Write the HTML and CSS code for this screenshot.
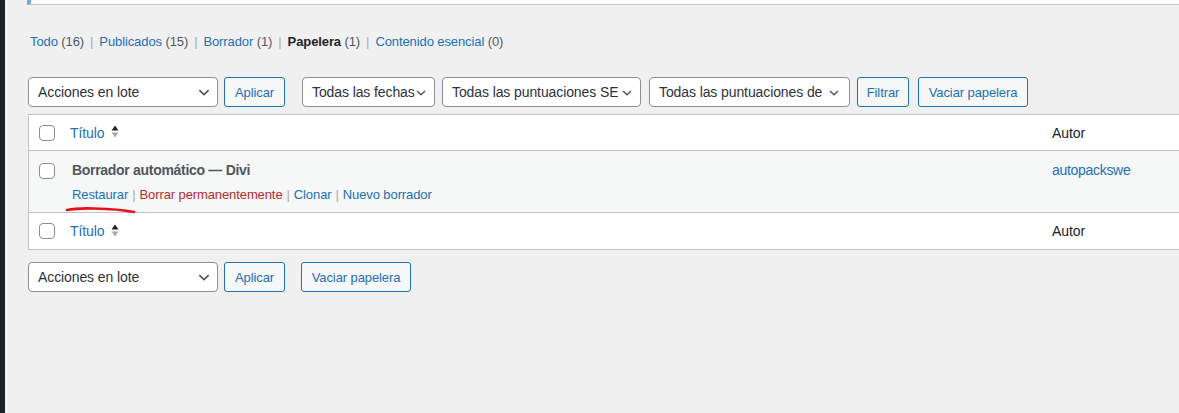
FILE: index.html
```html
<!DOCTYPE html>
<html lang="es">
<head>
<meta charset="utf-8">
<title>Entradas – Papelera</title>
<link rel="stylesheet" href="styles.css">
</head>
<body>
<div class="adminmenu"></div>
<main class="content">
  <div class="notice"></div>

  <ul class="subsubsub">
    <li><a class="link">Todo <span class="count">(16)</span></a><span class="sep">|</span></li>
    <li><a class="link">Publicados <span class="count">(15)</span></a><span class="sep">|</span></li>
    <li><a class="link">Borrador <span class="count">(1)</span></a><span class="sep">|</span></li>
    <li><a class="link current">Papelera <span class="count">(1)</span></a><span class="sep">|</span></li>
    <li><a class="link">Contenido esencial <span class="count">(0)</span></a></li>
  </ul>

  <div class="tablenav tablenav-top">
    <div class="actions">
      <div class="select w-bulk"><span class="select-text">Acciones en lote</span><svg class="chev" viewBox="0 0 10 6"><path d="M1 1 L5 4.8 L9 1"/></svg></div>
      <button class="btn w-apply">Aplicar</button>
    </div>
    <div class="actions">
      <div class="select w-dates"><span class="select-text">Todas las fechas</span><svg class="chev" viewBox="0 0 10 6"><path d="M1 1 L5 4.8 L9 1"/></svg></div>
      <div class="select w-seo"><span class="select-text">Todas las puntuaciones SEO</span><svg class="chev" viewBox="0 0 10 6"><path d="M1 1 L5 4.8 L9 1"/></svg></div>
      <div class="select w-read"><span class="select-text">Todas las puntuaciones de legibilidad</span><svg class="chev" viewBox="0 0 10 6"><path d="M1 1 L5 4.8 L9 1"/></svg></div>
      <button class="btn w-filter">Filtrar</button>
      <button class="btn w-empty">Vaciar papelera</button>
    </div>
  </div>

  <table class="list-table">
    <thead>
      <tr>
        <td class="check-column"><span class="checkbox"></span></td>
        <th class="column-title"><a class="sort-link">Título <svg class="sort" viewBox="0 0 8 14"><path class="up" d="M0.5 5.5 L4 0.5 L7.5 5.5 Z"/><path class="down" d="M0.5 7.5 L7.5 7.5 L4 12.5 Z"/></svg></a></th>
        <th class="column-author">Autor</th>
      </tr>
    </thead>
    <tbody>
      <tr class="alt">
        <td class="check-column row-check"><span class="checkbox"></span></td>
        <td class="column-title body-title">
          <strong class="row-title">Borrador automático — Divi</strong>
          <div class="row-actions">
            <a class="link">Restaurar</a><span class="sep">|</span><a class="link delete">Borrar permanentemente</a><span class="sep">|</span><a class="link">Clonar</a><span class="sep">|</span><a class="link">Nuevo borrador</a>
          </div>
        </td>
        <td class="column-author body-author"><a class="link">autopackswe</a></td>
      </tr>
    </tbody>
    <tfoot>
      <tr>
        <td class="check-column"><span class="checkbox"></span></td>
        <th class="column-title"><a class="sort-link">Título <svg class="sort" viewBox="0 0 8 14"><path class="up" d="M0.5 5.5 L4 0.5 L7.5 5.5 Z"/><path class="down" d="M0.5 7.5 L7.5 7.5 L4 12.5 Z"/></svg></a></th>
        <th class="column-author">Autor</th>
      </tr>
    </tfoot>
  </table>

  <div class="tablenav tablenav-bottom">
    <div class="actions">
      <div class="select w-bulk"><span class="select-text">Acciones en lote</span><svg class="chev" viewBox="0 0 10 6"><path d="M1 1 L5 4.8 L9 1"/></svg></div>
      <button class="btn w-apply">Aplicar</button>
    </div>
    <div class="actions">
      <button class="btn w-empty">Vaciar papelera</button>
    </div>
  </div>
</main>
<svg class="annotation" width="80" height="12" viewBox="0 0 80 12"><path d="M3 6 Q 12 4 30 4.5 Q 55 5 70 8"/></svg>
</body>
</html>
```

FILE: styles.css
```css
* { box-sizing: border-box; }

html, body {
  margin: 0;
  height: 100%;
}

body {
  background: #f0f0f1;
  font-family: "Liberation Sans", Arial, sans-serif;
  letter-spacing: -0.1px;
  color: #3c434a;
  display: flex;
  overflow: hidden;
  position: relative;
}

.adminmenu {
  width: 5px;
  flex: 0 0 5px;
  background: #1d2327;
}

.content {
  flex: 1;
  padding-left: 23px;
  min-width: 0;
}

.notice {
  height: 5px;
  margin-left: -1px;
  background: #fff;
  border-left: 4px solid #72aee6;
  border-bottom: 1px solid #c3c4c7;
}

/* status links */
.subsubsub {
  list-style: none;
  margin: 24px 0 0;
  padding: 0 0 0 2px;
  display: flex;
  font-size: 13px;
  line-height: 26px;
  height: 26px;
}

.subsubsub li { display: flex; white-space: pre; }

.link { color: #2271b1; text-decoration: none; }
.link.current { color: #1d2327; font-weight: 700; }
.count { color: #50575e; font-weight: 400; }
.sep { color: #a7aaad; padding: 0 6px; }

/* table nav */
.tablenav {
  display: flex;
  align-items: center;
  height: 30px;
}

.tablenav-top { margin-top: 22px; margin-bottom: 7px; }
.tablenav-bottom { margin-top: 12px; }

.actions { display: flex; gap: 6px; }
.tablenav-top .actions + .actions { margin-left: 17px; gap: 7px; }
.tablenav-bottom .actions + .actions { margin-left: 16px; }

.select {
  position: relative;
  height: 30px;
  background: #fff;
  border: 1px solid #8c8f94;
  border-radius: 4px;
  color: #2c3338;
  font-size: 14px;
  line-height: 28px;
  padding: 0 22px 0 9px;
  display: flex;
}

.select-text {
  overflow: hidden;
  white-space: nowrap;
  flex: 1;
}

.chev {
  position: absolute;
  right: 8px;
  top: 12px;
  width: 10px;
  height: 6px;
  fill: none;
  stroke: #50575e;
  stroke-width: 1.5;
}

.w-bulk { width: 190px; }
.w-bulk .chev { right: 7px; width: 12px; height: 7px; top: 11px; }
.w-dates { width: 133px; padding-right: 18px; }
.w-seo { width: 199px; }
.w-read { width: 201px; margin-left: 1px; padding-right: 27px; }
.w-read .chev { right: 10px; }

.btn {
  height: 30px;
  margin: 0;
  padding: 0;
  background: #f6f7f7;
  border: 1px solid #2271b1;
  border-radius: 3px;
  color: #2271b1;
  font-family: inherit;
  letter-spacing: inherit;
  font-size: 13px;
  text-align: center;
  cursor: pointer;
}

.w-apply { width: 61px; }
.w-filter { width: 52px; }
.w-empty { width: 110px; }
.tablenav-top .w-empty { margin-left: 2px; }

/* list table */
.list-table {
  width: 1170px;
  border-collapse: separate;
  border-spacing: 0;
  border: 1px solid #c3c4c7;
  background: #fff;
  font-size: 14px;
  table-layout: fixed;
}

.list-table th,
.list-table td {
  text-align: left;
  font-weight: 400;
  vertical-align: top;
  padding: 0;
}

.list-table thead th,
.list-table thead td,
.list-table tfoot th,
.list-table tfoot td {
  height: 36px;
  vertical-align: middle;
}

.list-table thead th,
.list-table thead td { border-bottom: 1px solid #c3c4c7; }
.list-table tfoot th,
.list-table tfoot td { border-top: 1px solid #c3c4c7; height: 37px; }

.check-column { width: 31px; padding-left: 10px !important; }

.checkbox {
  display: block;
  width: 16px;
  height: 16px;
  border: 1px solid #8c8f94;
  border-radius: 4px;
  background: #fff;
}

.column-title { width: 982px; padding-left: 10px !important; }
.column-author { padding-left: 10px !important; color: #1d2327; }

.sort-link {
  color: #2271b1;
  text-decoration: none;
  display: inline-flex;
  align-items: center;
  gap: 7px;
}

.sort {
  width: 8px;
  height: 14px;
  margin-top: -1px;
}
.sort .up { fill: #1d2327; }
.sort .down { fill: #a7aaad; }

tr.alt td { background: #f6f7f7; height: 61px; }

.row-check { padding-top: 12px !important; }

.body-title {
  padding: 9px 10px 0 12px !important;
}

.row-title {
  display: block;
  color: #50575e;
  font-weight: 700;
  font-size: 14px;
  line-height: 20px;
  letter-spacing: -0.3px;
}

.row-actions {
  font-size: 13px;
  line-height: 20px;
  margin-top: 5px;
  white-space: nowrap;
}

.row-actions .sep { padding: 0 4px; }
.row-actions .delete { color: #b32d2e; }

.body-author {
  padding-top: 9px !important;
  font-size: 14px;
  line-height: 20px;
  letter-spacing: -0.3px;
}

.annotation {
  position: absolute;
  left: 64px;
  top: 204px;
  fill: none;
  stroke: #e3121b;
  stroke-width: 2.6;
  stroke-linecap: round;
}
```
